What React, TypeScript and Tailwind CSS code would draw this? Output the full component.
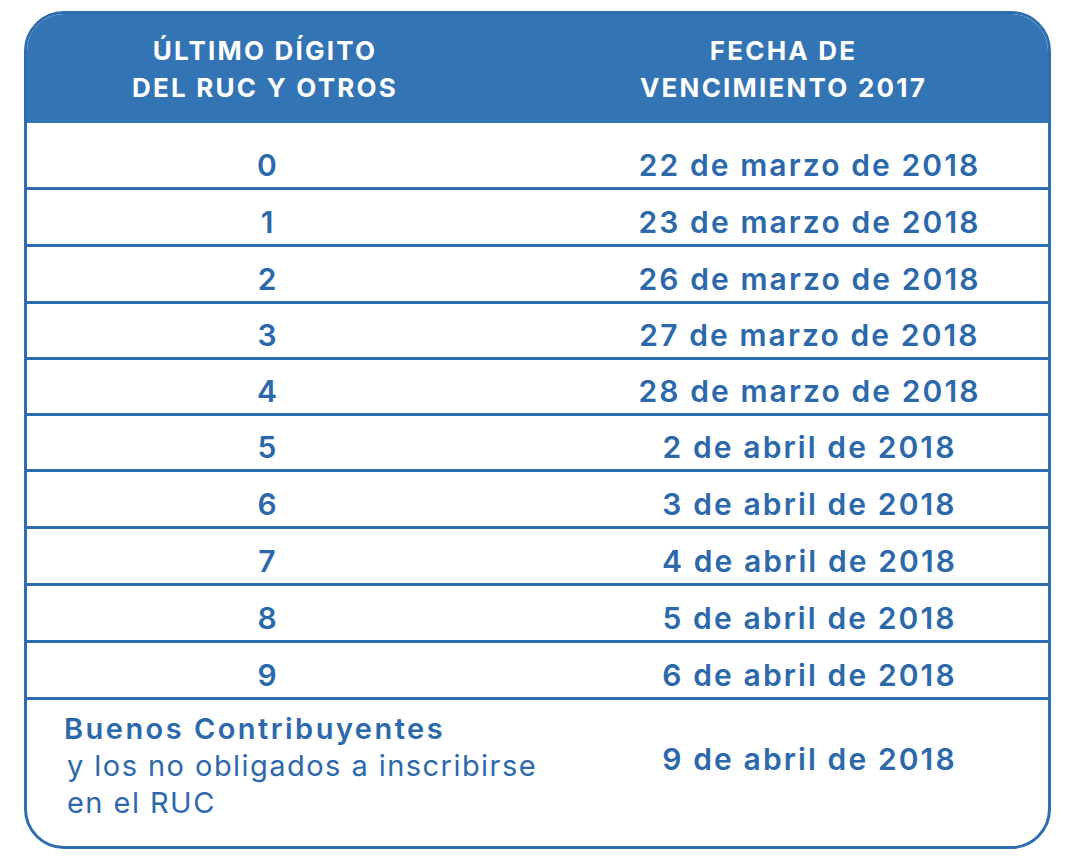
const rows = [
  { digit: '0', date: '22 de marzo de 2018', h: 'h-[67px] pt-[19px]' },
  { digit: '1', date: '23 de marzo de 2018', h: 'h-[57px] pt-[9px]' },
  { digit: '2', date: '26 de marzo de 2018', h: 'h-[57px] pt-[9px]' },
  { digit: '3', date: '27 de marzo de 2018', h: 'h-[56px] pt-[9px]' },
  { digit: '4', date: '28 de marzo de 2018', h: 'h-[56px] pt-[9px]' },
  { digit: '5', date: '2 de abril de 2018', h: 'h-[56px] pt-[9px]' },
  { digit: '6', date: '3 de abril de 2018', h: 'h-[57px] pt-[9px]' },
  { digit: '7', date: '4 de abril de 2018', h: 'h-[57px] pt-[9px]' },
  { digit: '8', date: '5 de abril de 2018', h: 'h-[57px] pt-[9px]' },
  { digit: '9', date: '6 de abril de 2018', h: 'h-[57px] pt-[9px]' },
];

export default function App() {
  return (
    <div className="min-h-[862px] w-[1072px] bg-white pt-[11px] pl-[24px] font-['Inter',sans-serif]">
      <div className="flex h-[838px] w-[1027px] flex-col overflow-hidden rounded-[40px] border-[3px] border-[#2e6db0] bg-white text-[#2c69ab]">
        {/* Header */}
        <div className="grid h-[109px] shrink-0 grid-cols-[480px_1fr] bg-[#3375b4] text-[26px] font-bold uppercase leading-[37px] tracking-[0.085em] text-white">
          <div className="flex flex-col items-center justify-center pr-[4px]">
            <span>Último dígito</span>
            <span>del RUC y otros</span>
          </div>
          <div className="flex flex-col items-center justify-center pl-[12px]">
            <span>Fecha de</span>
            <span>vencimiento 2017</span>
          </div>
        </div>

        {/* Body */}
        {rows.map((r) => (
          <div
            key={r.digit}
            className={`grid shrink-0 grid-cols-[480px_1fr] border-b-[3px] border-[#2e6db0] text-[30px] font-semibold leading-[34px] ${r.h}`}
          >
            <div className="flex items-center justify-center">{r.digit}</div>
            <div className="flex items-center justify-center pl-[64px] tracking-[0.07em]">{r.date}</div>
          </div>
        ))}

        <div className="grid min-h-0 flex-1 grid-cols-[480px_1fr]">
          <div className="flex flex-col justify-center whitespace-nowrap pl-[37px] pb-[16px] text-[29px] leading-[37px] tracking-[0.05em]">
            <span className="font-semibold tracking-[0.085em]">Buenos Contribuyentes</span>
            <span className="pl-[3px]">y los no obligados a inscribirse</span>
            <span className="pl-[3px]">en el RUC</span>
          </div>
          <div className="flex items-center justify-center whitespace-nowrap pl-[64px] pb-[28px] text-[30px] font-semibold tracking-[0.07em]">
            9 de abril de 2018
          </div>
        </div>
      </div>
    </div>
  );
}
